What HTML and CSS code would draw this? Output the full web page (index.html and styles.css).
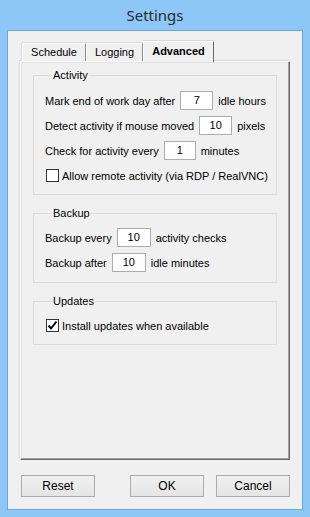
FILE: index.html
```html
<!DOCTYPE html>
<html>
<head>
<meta charset="utf-8">
<link rel="stylesheet" href="styles.css">
</head>
<body>
<div class="window">
  <div class="titlebar">Settings</div>
  <div class="client">
    <div class="tabs">
      <div class="tab">Schedule</div>
      <div class="tab">Logging</div>
      <div class="tab active">Advanced</div>
    </div>
    <div class="panel">
      <fieldset class="group g-activity">
        <legend>Activity</legend>
        <div class="row"><span>Mark end of work day after</span><span class="input w33">7</span><span>idle hours</span></div>
        <div class="row"><span>Detect activity if mouse moved</span><span class="input w33">10</span><span>pixels</span></div>
        <div class="row"><span>Check for activity every</span><span class="input w32">1</span><span>minutes</span></div>
        <div class="row"><span class="check"></span><span class="cklabel">Allow remote activity (via RDP / RealVNC)</span></div>
      </fieldset>
      <fieldset class="group g-backup">
        <legend>Backup</legend>
        <div class="row"><span>Backup every</span><span class="input w34">10</span><span>activity checks</span></div>
        <div class="row"><span>Backup after</span><span class="input w34">10</span><span>idle minutes</span></div>
      </fieldset>
      <fieldset class="group g-updates">
        <legend>Updates</legend>
        <div class="row"><span class="check checked"><svg width="11" height="11" viewBox="0 0 11 11"><path d="M1.5 5.5 L4 8.5 L9.5 1.5" fill="none" stroke="#000" stroke-width="2"/></svg></span><span class="cklabel">Install updates when available</span></div>
      </fieldset>
    </div>
    <div class="buttons">
      <button class="btn">Reset</button>
      <span class="spacer"></span>
      <button class="btn">OK</button>
      <button class="btn">Cancel</button>
    </div>
  </div>
</div>
</body>
</html>
```
FILE: styles.css
```css
html, body {
  margin: 0;
  padding: 0;
}
body {
  width: 310px;
  height: 517px;
  background: #8cc7f8;
  font-family: "Liberation Sans", Arial, sans-serif;
  font-size: 11px;
  color: #000;
  overflow: hidden;
}
.window {
  height: 517px;
  padding: 0 7px 7px 7px;
  box-sizing: border-box;
  display: flex;
  flex-direction: column;
}
.titlebar {
  height: 30px;
  line-height: 30px;
  text-align: center;
  font-family: "Noto Sans", sans-serif;
  font-size: 15px;
  color: #2b2b2b;
  flex: none;
}
.client {
  flex: 1;
  border: 1px solid #6ea6d8;
  background: #f0f0f0;
  display: flex;
  flex-direction: column;
  padding: 10px 12px 12px 12px;
}
.tabs {
  display: flex;
  height: 20px;
  padding-left: 2px;
  align-items: flex-end;
  position: relative;
  z-index: 2;
}
.tab {
  flex: none;
  height: 18px;
  box-sizing: border-box;
  border-top: 1px solid #fff;
  border-left: 1px solid #fff;
  border-right: 1px solid #8a8a8a;
  box-shadow: 0 -1px 0 #dadada;
  text-align: center;
  line-height: 16px;
  background: #f0f0f0;
}
.tab:nth-child(1) { width: 64px; box-shadow: 0 -1px 0 #dadada, -1px 0 0 #dadada; }
.tab:nth-child(2) { width: 57px; }
.tab.active {
  width: 71px;
  height: 21px;
  margin-bottom: -1px;
  font-weight: bold;
  line-height: 18px;
  border-right: 1px solid #696969;
  box-shadow: 0 -1px 0 #dadada;
}
.panel {
  height: 399px;
  box-sizing: border-box;
  border-top: 1px solid #fff;
  border-left: 1px solid #fff;
  border-right: 1px solid #696969;
  border-bottom: 1px solid #696969;
  box-shadow: inset -1px -1px 0 #a0a0a0, inset 1px 1px 0 #e3e3e3, -1px -1px 0 #dadada;
  padding: 5px 12px 0 12px;
  display: flex;
  flex-direction: column;
  gap: 10px;
  position: relative;
  z-index: 1;
}
.group {
  margin: 0;
  border: 1px solid #dcdcdc;
  padding: 4px 0 6px 11px;
  min-width: 0;
}
.group legend {
  padding: 0 1px;
  margin-left: 7px;
  line-height: 16px;
}
.g-activity { padding-top: 5px; }
.g-backup { padding-bottom: 7px; }
.row {
  height: 25px;
  display: flex;
  align-items: center;
  gap: 5px;
  white-space: nowrap;
}
.row > span { flex: none; }
.input {
  height: 19px;
  box-sizing: border-box;
  border: 1px solid #abadb3;
  background: #fff;
  text-align: center;
  line-height: 17px;
}
.w32 { width: 32px; }
.w33 { width: 33px; }
.w34 { width: 34px; }
.check {
  width: 13px;
  height: 13px;
  box-sizing: border-box;
  border: 1px solid #333;
  background: #fff;
  margin-left: 1px;
  display: flex;
  align-items: center;
  justify-content: center;
}
.row .cklabel { margin-left: -2px; }
.buttons {
  margin-top: auto;
  display: flex;
  gap: 12px;
  padding-left: 1px;
}
.spacer { flex: 1; }
.btn {
  width: 74px;
  height: 22px;
  border: 1px solid #acacac;
  background: linear-gradient(#f0f0f0, #e5e5e5);
  font-family: inherit;
  font-size: 12px;
  color: #000;
  padding: 0;
}
```
